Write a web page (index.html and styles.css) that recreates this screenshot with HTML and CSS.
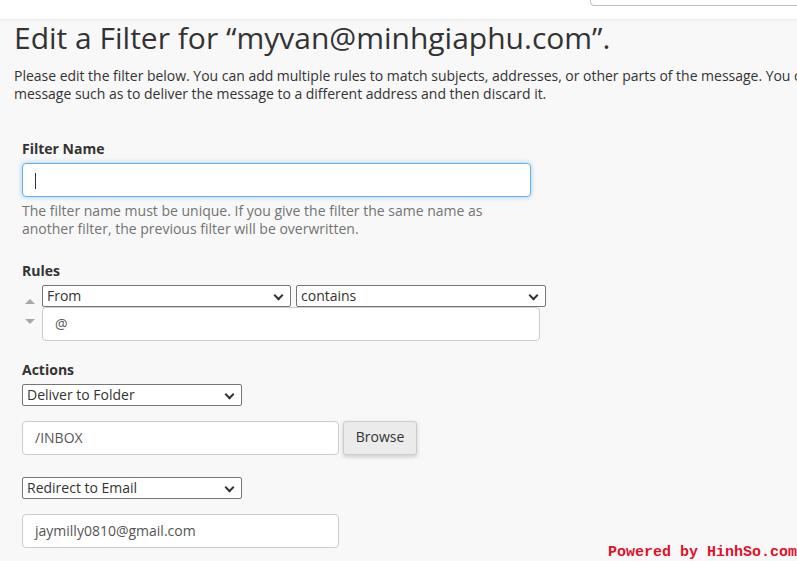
FILE: index.html
```html
<!DOCTYPE html>
<html>
<head>
<meta charset="utf-8">
<link rel="stylesheet" href="styles.css">
</head>
<body>
<div class="topbar">
  <div class="search"></div>
</div>
<div class="page">
  <h1 class="title">Edit a Filter for “myvan@minhgiaphu.com”.</h1>
  <p class="intro">Please edit the filter below. You can add multiple rules to match subjects, addresses, or other parts of the message. You can then add multiple actions to take on a<br>message such as to deliver the message to a different address and then discard it.</p>

  <div class="form">
    <div class="group">
      <label class="label">Filter Name</label>
      <div class="name-input"><span class="caret"></span></div>
      <p class="help">The filter name must be unique. If you give the filter the same name as<br>another filter, the previous filter will be overwritten.</p>
    </div>

    <div class="group rules">
      <label class="label">Rules</label>
      <div class="rule">
        <div class="arrows">
          <span class="arrow up"></span>
          <span class="arrow down"></span>
        </div>
        <div class="rule-fields">
          <div class="selects">
            <div class="select w249">From<span class="chev"></span></div>
            <div class="select w250">contains<span class="chev"></span></div>
          </div>
          <div class="text-input w498">@</div>
        </div>
      </div>
    </div>

    <div class="group actions">
      <label class="label">Actions</label>
      <div class="select w220">Deliver to Folder<span class="chev"></span></div>
      <div class="row">
        <div class="text-input w317">/INBOX</div>
        <button class="btn">Browse</button>
      </div>
      <div class="select w220 gap-top">Redirect to Email<span class="chev"></span></div>
      <div class="row">
        <div class="text-input w317">jaymilly0810@gmail.com</div>
      </div>
    </div>
  </div>
</div>
<div class="powered">Powered by HinhSo.com</div>
</body>
</html>
```

FILE: styles.css
```css
html, body {
  margin: 0;
  padding: 0;
  width: 797px;
  height: 561px;
  overflow: hidden;
  background: #f8f8f8;
  font-family: "Open Sans", "Liberation Sans", sans-serif;
  color: #333;
  position: relative;
}
.topbar {
  height: 19px;
  background: #fff;
  border-bottom: 1px solid #ececec;
  box-shadow: 0 1px 2px rgba(0,0,0,0.04);
  position: relative;
}
.search {
  position: absolute;
  left: 590px;
  top: -10px;
  width: 230px;
  height: 14px;
  border: 1px solid #bdbdbd;
  border-radius: 4px;
  background: #fff;
}
.page {
  padding: 0 0 0 14px;
}
.title {
  margin: 0;
  font-size: 30px;
  font-weight: 400;
  line-height: 36px;
  white-space: nowrap;
}
.intro {
  margin: 11px 0 0 0;
  font-size: 14px;
  line-height: 18px;
  white-space: nowrap;
  letter-spacing: -0.02px;
}
.form {
  padding-left: 8px;
  margin-top: 36px;
}
.label {
  display: block;
  font-weight: 700;
  font-size: 14px;
  line-height: 20px;
}
.name-input {
  margin-top: 4px;
  width: 507px;
  height: 32px;
  border: 1px solid #66afe9;
  border-radius: 4px;
  background: #fff;
  box-shadow: 0 0 5px rgba(102,175,233,0.6);
  position: relative;
}
.caret {
  position: absolute;
  left: 12px;
  top: 9px;
  width: 1px;
  height: 16px;
  background: #333;
}
.help {
  margin: 5px 0 0 0;
  font-size: 14px;
  line-height: 18px;
  color: #737373;
}
.rules {
  margin-top: 23px;
}
.rule {
  display: flex;
  margin-top: 4px;
}
.arrows {
  width: 20px;
  display: flex;
  flex-direction: column;
  padding-top: 14px;
}
.arrow {
  width: 0;
  height: 0;
  margin-left: 3px;
  border-left: 5px solid transparent;
  border-right: 5px solid transparent;
}
.arrow.up {
  border-bottom: 5px solid #a8a8a8;
}
.arrow.down {
  margin-top: 15px;
  border-top: 5px solid #a8a8a8;
}
.selects {
  display: flex;
  gap: 5px;
}
.select {
  box-sizing: border-box;
  height: 22px;
  border: 1px solid #767676;
  border-radius: 2px;
  background: #fff;
  font-size: 14px;
  line-height: 20px;
  padding-left: 4px;
  position: relative;
  color: #333;
}
.chev {
  position: absolute;
  right: 8px;
  top: 6px;
  width: 5px;
  height: 5px;
  border-right: 2px solid #333;
  border-bottom: 2px solid #333;
  transform: rotate(45deg);
}
.w249 { width: 249px; }
.w250 { width: 250px; }
.w220 { width: 220px; }
.text-input {
  box-sizing: border-box;
  height: 34px;
  border: 1px solid #ccc;
  border-radius: 4px;
  background: #fff;
  font-size: 14px;
  line-height: 32px;
  padding-left: 12px;
  color: #555;
}
.w498 { width: 498px; }
.w317 { width: 317px; }
.actions {
  margin-top: 19px;
}
.actions .select {
  margin-top: 4px;
}
.row {
  display: flex;
  gap: 4px;
  margin-top: 15px;
}
.gap-top {
  margin-top: 22px !important;
}
.btn {
  height: 34px;
  width: 74px;
  border: 1px solid #ccc;
  border-radius: 3px;
  background: #ebebeb;
  font-family: "Open Sans", "Liberation Sans", sans-serif;
  font-size: 14px;
  color: #333;
  box-shadow: 0 2px 4px rgba(0,0,0,0.18);
  padding: 0 0 3px 0;
}
.powered {
  position: absolute;
  right: 0;
  bottom: 0;
  font-family: "Liberation Mono", monospace;
  font-size: 15px;
  font-weight: 700;
  line-height: 16px;
  color: #e0102a;
}
```
